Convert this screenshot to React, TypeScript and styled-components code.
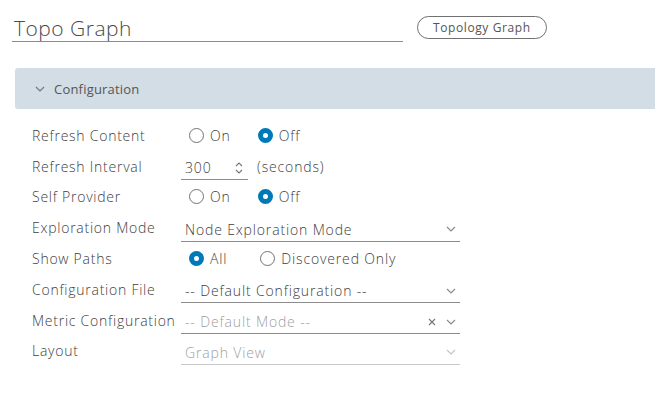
import styled, { createGlobalStyle } from "styled-components";

const GlobalStyle = createGlobalStyle`
  html, body {
    margin: 0;
    padding: 0;
    background: #ffffff;
    font-family: "Open Sans", "Noto Sans", sans-serif;
    color: #565656;
  }
`;

const Page = styled.div`
  width: 655px;
  height: 419px;
  overflow: hidden;
  padding-top: 14px;
  box-sizing: border-box;
`;

const Header = styled.div`
  display: flex;
  align-items: flex-start;
  padding-left: 12px;
`;

const TitleInput = styled.div`
  width: 391px;
  height: 28px;
  border-bottom: 1px solid #8c8c8c;
  font-size: 21px;
  font-weight: 300;
  line-height: 28px;
  color: #4a4a4a;
  padding-left: 2px;
  box-sizing: border-box;
  letter-spacing: 0.5px;
`;

const Badge = styled.div`
  margin-left: 14px;
  margin-top: 2px;
  height: 23px;
  padding: 0 15px;
  border: 1px solid #707070;
  border-radius: 12px;
  font-size: 12px;
  letter-spacing: 0.6px;
  line-height: 21px;
  color: #555;
  box-sizing: border-box;
`;

const SectionBar = styled.div`
  margin: 26px 0 0 15px;
  height: 41px;
  background: #d2dde5;
  border-radius: 3px 0 0 3px;
  display: flex;
  align-items: center;
  padding-left: 20px;
  gap: 9px;
  font-size: 13px;
  letter-spacing: 0.2px;
  color: #565656;
`;

const Form = styled.div`
  margin: 11px 0 0 32px;
  display: grid;
  grid-template-columns: 149px auto;
  grid-auto-rows: 30.8px;
  align-items: center;
`;

const Label = styled.div`
  font-size: 14px;
  font-weight: 300;
  letter-spacing: 0.75px;
  color: #3e3e3e;
  white-space: nowrap;
`;

const RadioGroup = styled.div<{ $gap?: number }>`
  display: flex;
  align-items: center;
  gap: ${(p) => p.$gap ?? 27}px;
  padding-left: 8px;
`;

const RadioOption = styled.label`
  display: flex;
  align-items: center;
  gap: 6px;
  font-size: 14px;
  font-weight: 300;
  letter-spacing: 0.85px;
  color: #3e3e3e;
`;

const RadioCircle = styled.span<{ $checked?: boolean }>`
  width: 15px;
  height: 15px;
  border-radius: 50%;
  box-sizing: border-box;
  border: ${(p) => (p.$checked ? "5px solid #0079b8" : "1px solid #737373")};
  background: #fff;
  display: inline-block;
`;

const NumberWrap = styled.div`
  display: flex;
  align-items: center;
  gap: 9px;
  font-size: 14px;
  font-weight: 300;
  letter-spacing: 0.85px;
  color: #3e3e3e;
`;

const NumberBox = styled.div`
  width: 67px;
  height: 24px;
  border-bottom: 1px solid #8c8c8c;
  display: flex;
  align-items: center;
  justify-content: space-between;
  padding: 0 5px 0 4px;
  box-sizing: border-box;
  margin-top: 4px;
`;

const Select = styled.div<{ $disabled?: boolean }>`
  width: 279px;
  height: 24px;
  margin-top: 4px;
  border-bottom: 1px solid ${(p) => (p.$disabled ? "#c8c8c8" : "#8c8c8c")};
  display: flex;
  align-items: center;
  padding: 0 4px 0 4px;
  box-sizing: border-box;
  font-size: 14px;
  font-weight: 300;
  letter-spacing: 0.85px;
`;

const SelectText = styled.span<{ $muted?: boolean }>`
  flex: 1;
  color: ${(p) => (p.$muted ? "#a0a0a0" : "#3e3e3e")};
`;

const Icons = styled.span`
  display: flex;
  align-items: center;
  gap: 10px;
`;

function Chevron({ color = "#8a8a8a" }: { color?: string }) {
  return (
    <svg width="10" height="6" viewBox="0 0 10 6">
      <path d="M1 1 L5 5 L9 1" fill="none" stroke={color} strokeWidth="1.2" />
    </svg>
  );
}

function Spinner() {
  return (
    <svg width="8" height="14" viewBox="0 0 8 14">
      <path d="M1 5 L4 2 L7 5 M1 9 L4 12 L7 9" fill="none" stroke="#777" strokeWidth="1.1" />
    </svg>
  );
}

function Clear() {
  return (
    <svg width="8" height="8" viewBox="0 0 8 8">
      <path d="M1 1 L7 7 M7 1 L1 7" stroke="#777" strokeWidth="1.2" />
    </svg>
  );
}

function Radio({ label, checked }: { label: string; checked?: boolean }) {
  return (
    <RadioOption>
      <RadioCircle $checked={checked} />
      {label}
    </RadioOption>
  );
}

export default function App() {
  return (
    <Page>
      <GlobalStyle />
      <Header>
        <TitleInput>Topo Graph</TitleInput>
        <Badge>Topology Graph</Badge>
      </Header>
      <SectionBar>
        <Chevron color="#777" />
        Configuration
      </SectionBar>
      <Form>
        <Label>Refresh Content</Label>
        <RadioGroup>
          <Radio label="On" />
          <Radio label="Off" checked />
        </RadioGroup>

        <Label>Refresh Interval</Label>
        <NumberWrap>
          <NumberBox>
            300
            <Spinner />
          </NumberBox>
          (seconds)
        </NumberWrap>

        <Label>Self Provider</Label>
        <RadioGroup>
          <Radio label="On" />
          <Radio label="Off" checked />
        </RadioGroup>

        <Label>Exploration Mode</Label>
        <Select>
          <SelectText>Node Exploration Mode</SelectText>
          <Chevron />
        </Select>

        <Label>Show Paths</Label>
        <RadioGroup $gap={33}>
          <Radio label="All" checked />
          <Radio label="Discovered Only" />
        </RadioGroup>

        <Label>Configuration File</Label>
        <Select>
          <SelectText>-- Default Configuration --</SelectText>
          <Chevron />
        </Select>

        <Label>Metric Configuration</Label>
        <Select>
          <SelectText $muted>-- Default Mode --</SelectText>
          <Icons>
            <Clear />
            <Chevron />
          </Icons>
        </Select>

        <Label>Layout</Label>
        <Select $disabled>
          <SelectText $muted>Graph View</SelectText>
          <Chevron color="#c4c4c4" />
        </Select>
      </Form>
    </Page>
  );
}
